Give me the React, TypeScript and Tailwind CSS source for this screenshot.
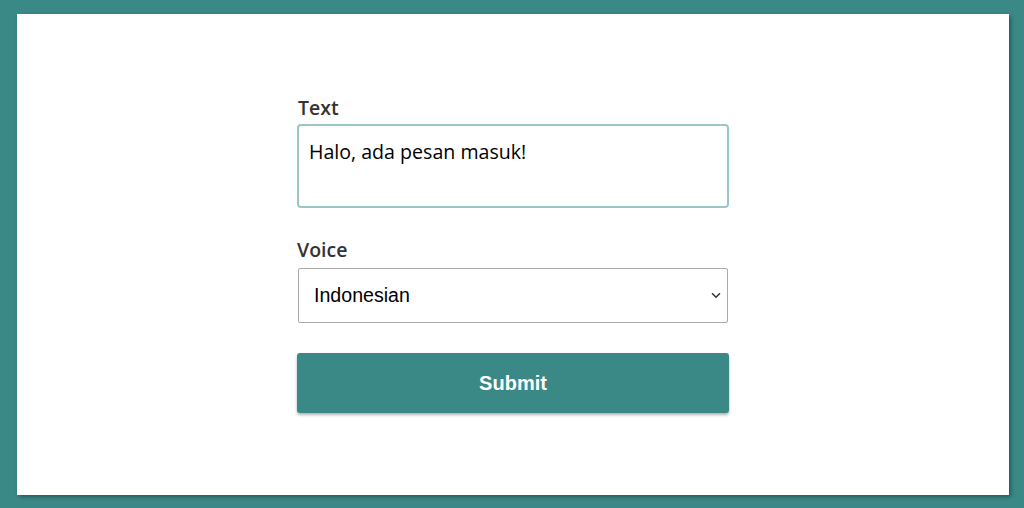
import React from "react";

export default function App() {
  return (
    <div className="w-[1024px] h-[508px] bg-[#3b8987] pl-[17px] pr-[15px] pt-[14px] pb-[13px]">
      <div className="w-full h-full bg-white shadow-[2px_2px_4px_rgba(0,0,0,0.35)] flex justify-center pt-[81px]">
        <div className="w-[432px] flex flex-col" style={{ fontFamily: '"Open Sans", sans-serif' }}>
          <label className="text-[19.5px] leading-[26px] font-semibold text-[#333] pl-[1px]">Text</label>
          <div className="mt-[3px] h-[84px] border-2 border-[#9cc6c6] rounded-[4px] px-[10px] pt-[12px] text-[19.6px] leading-[27px] text-black">
            Halo, ada pesan masuk!
          </div>
          <label className="mt-[29px] text-[19.5px] leading-[26px] font-semibold text-[#333]">Voice</label>
          <div className="mt-[5px] mx-[1px] h-[55px] border border-[#a9a9a9] rounded-[2px] flex items-center justify-between pl-[15px] pr-[5px]">
            <span className="text-[19.6px] text-black" style={{ fontFamily: '"Liberation Sans", Arial, sans-serif' }}>Indonesian</span>
            <svg width="10" height="7" viewBox="0 0 10 7" className="mr-[1px]">
              <path d="M1 1.2 L5 5.2 L9 1.2" fill="none" stroke="#333" strokeWidth="1.5" />
            </svg>
          </div>
          <button className="mt-[30px] h-[60px] rounded-[3px] bg-[#3b8987] shadow-[0_2px_3px_rgba(0,0,0,0.3)] text-white text-[20px] font-bold" style={{ fontFamily: '"Liberation Sans", Arial, sans-serif' }}>
            Submit
          </button>
        </div>
      </div>
    </div>
  );
}
